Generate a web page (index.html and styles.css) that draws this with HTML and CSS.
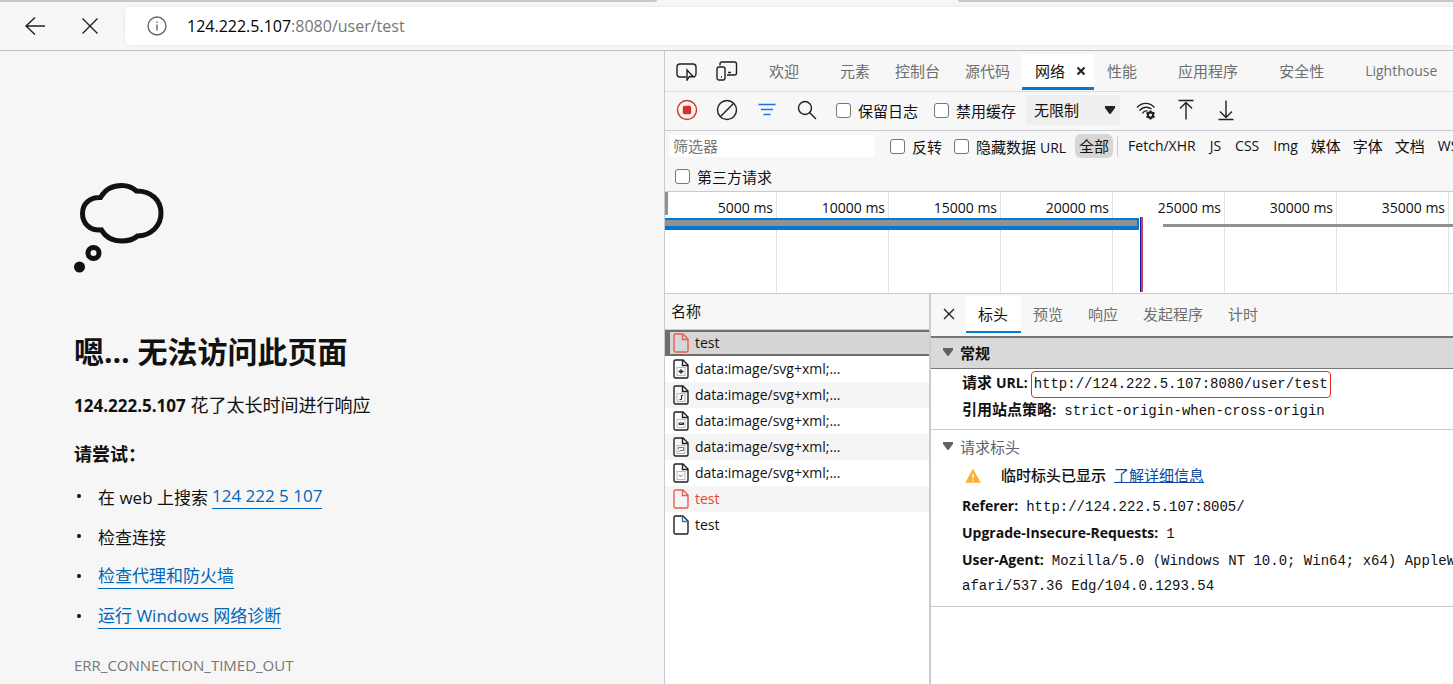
FILE: index.html
```html
<!DOCTYPE html>
<html lang="zh-CN">

<head>
    <meta charset="UTF-8">
    <meta name="viewport" content="width=device-width, initial-scale=1.0">
    <link rel="stylesheet" href="styles.css">
    <title>124.222.5.107</title>
</head>

<body>
    <!-- 浏览器地址栏 -->
    <div class="tabstrip">
        <span class="strip-left"></span>
        <span class="strip-right"></span>
    </div>
    <header class="browser-bar">
        <button class="nav-btn" aria-label="后退">
            <svg width="22" height="20" viewBox="0 0 22 20"><path d="M11 1.500L2 10l9 8.500M2 10h19" /></svg>
        </button>
        <button class="nav-btn" aria-label="停止">
            <svg width="18" height="18" viewBox="0 0 18 18"><path d="M1.500 1.500l15 15M16.500 1.500l-15 15" /></svg>
        </button>
        <div class="address">
            <svg width="20" height="20" viewBox="0 0 20 20"><circle cx="10" cy="10" r="9" /><path d="M10 8.500v6M10 5.500v1.500" /></svg>
            <span class="url"><b>124.222.5.107</b>:8080/user/test</span>
        </div>
    </header>

    <div class="main">
        <!-- 错误页 -->
        <main class="error-page">
            <svg class="cloud" width="92" height="92" viewBox="0 0 92 92">
                <path d="M26.500 15.500C31 7.500 38 3.500 48 3.500c6 0 10.500 2 14.500 5.500C77 9 87 18 87 31S77 53.500 63.500 54c-4 3.500-9 5-15.500 5-9.500 0-16.500-4-20.500-11C16 49 8.500 41.500 8.500 31.500S16 15 26.500 15.500z" />
                <circle cx="19.500" cy="71" r="5.500" />
                <circle class="dot" cx="5.500" cy="85" r="5.500" />
            </svg>
            <h1>嗯… 无法访问此页面</h1>
            <p class="reason"><b>124.222.5.107</b> 花了太长时间进行响应</p>
            <h2>请尝试：</h2>
            <ul class="tips">
                <li>在 web 上搜索 <a href="#">124 222 5 107</a></li>
                <li>检查连接</li>
                <li><a href="#">检查代理和防火墙</a></li>
                <li><a href="#">运行 Windows 网络诊断</a></li>
            </ul>
            <div class="code">ERR_CONNECTION_TIMED_OUT</div>
        </main>

        <!-- 开发者工具 -->
        <section class="devtools">
            <nav class="tool-tabs">
                <button class="icon-btn" aria-label="选择元素">
                    <svg width="22" height="20" viewBox="0 0 22 20"><path d="M10 16H4a3 3 0 0 1-3-3V6a3 3 0 0 1 3-3h13a3 3 0 0 1 3 3v7a3 3 0 0 1-2 2.800M11 9v10l2.500-3.500 4 .3z" /></svg>
                </button>
                <button class="icon-btn" aria-label="设备仿真">
                    <svg width="22" height="20" viewBox="0 0 22 20"><path d="M4 4.500V3a2 2 0 0 1 2-2h12.500a2 2 0 0 1 2 2v9a2 2 0 0 1-2 2H11M12 11.500h3M5 16h1" /><rect x="1" y="6" width="8" height="13" rx="2" /></svg>
                </button>
                <div class="tabs">
                    <button class="closable">欢迎</button>
                    <button>元素</button>
                    <button>控制台</button>
                    <button>源代码</button>
                    <button class="current">网络 <svg width="10" height="10" viewBox="0 0 10 10"><path d="M1.500 1.500l7 7M8.500 1.500l-7 7" /></svg></button>
                    <button class="closable">性能</button>
                    <button class="closable">应用程序</button>
                    <button class="closable">安全性</button>
                    <button class="latin">Lighthouse</button>
                </div>
            </nav>

            <div class="toolbar">
                <button class="icon-btn record" aria-label="停止记录">
                    <svg width="22" height="22" viewBox="0 0 22 22"><circle cx="11" cy="11" r="9.500" /><rect x="7.500" y="7.500" width="7" height="7" rx="1" /></svg>
                </button>
                <button class="icon-btn" aria-label="清除">
                    <svg width="22" height="22" viewBox="0 0 22 22"><circle cx="11" cy="11" r="9.500" /><path d="M4.500 17.500l13-13" /></svg>
                </button>
                <button class="icon-btn filter-icon" aria-label="筛选">
                    <svg width="22" height="22" viewBox="0 0 22 22"><path d="M2.500 5.500h17M5 10.500h12M7.500 15.500h7" /></svg>
                </button>
                <button class="icon-btn" aria-label="搜索">
                    <svg width="22" height="22" viewBox="0 0 22 22"><circle cx="9" cy="9" r="6.500" /><path d="M13.500 13.500l6.500 6.500" /></svg>
                </button>
                <label><input type="checkbox">保留日志</label>
                <label><input type="checkbox">禁用缓存</label>
                <div class="throttle">
                    <select aria-label="网络节流">
                        <option>无限制</option>
                    </select>
                    <svg width="12" height="10" viewBox="0 0 12 10"><path d="M1 1h10v2L6.500 9h-1L1 3z" /></svg>
                </div>
                <button class="icon-btn" aria-label="网络条件">
                    <svg width="22" height="22" viewBox="0 0 22 22"><path d="M2 8.500C7 3 14.500 3 19.500 8.500M4.500 11.500c3.500-4 8.500-4 12-1.500M7.500 14.500c1-2 3-3 5-2.500" /><circle class="gear" cx="15.500" cy="16" r="3" /><path class="teeth" d="M15.500 11.500v9M11.500 13.700l8 4.600M11.500 18.300l8-4.600" /><circle class="hole" cx="15.500" cy="16" r="1.500" /></svg>
                </button>
                <button class="icon-btn" aria-label="导入">
                    <svg width="22" height="22" viewBox="0 0 22 22"><path d="M3.500 1.500h15M11 20.500V3.500M5 9.500l6-6 6 6" /></svg>
                </button>
                <button class="icon-btn" aria-label="导出">
                    <svg width="22" height="22" viewBox="0 0 22 22"><path d="M3.500 20.500h15M11 1.500v17M5 12.500l6 6 6-6" /></svg>
                </button>
            </div>

            <div class="filters">
                <div class="filter-row">
                    <input class="filter-text" type="text" placeholder="筛选器" aria-label="筛选器">
                    <label><input type="checkbox">反转</label>
                    <label><input type="checkbox"><span>隐藏数据 <span class="latin">URL</span></span></label>
                    <div class="types">
                        <button class="all">全部</button>
                        <button class="latin">Fetch/XHR</button>
                        <button class="latin">JS</button>
                        <button class="latin">CSS</button>
                        <button class="latin">Img</button>
                        <button>媒体</button>
                        <button>字体</button>
                        <button>文档</button>
                        <button class="latin">WS</button>
                    </div>
                </div>
                <div class="filter-row">
                    <label><input type="checkbox">第三方请求</label>
                </div>
            </div>

            <div class="timeline">
                <span>5000 ms</span>
                <span>10000 ms</span>
                <span>15000 ms</span>
                <span>20000 ms</span>
                <span>25000 ms</span>
                <span>30000 ms</span>
                <span>35000 ms</span>
                <span></span>
                <i class="grip"></i>
                <i class="bar"></i>
                <i class="event"></i>
                <i class="pending"></i>
            </div>

            <div class="panels">
                <table class="requests">
                    <thead>
                        <tr><th>名称</th></tr>
                    </thead>
                    <tbody>
                        <tr class="selected failed">
                            <td><svg width="16" height="20" viewBox="0 0 16 20"><path d="M1 2.500A1.500 1.500 0 0 1 2.500 1H10l5 5v11.500a1.500 1.500 0 0 1-1.500 1.500h-11A1.500 1.500 0 0 1 1 17.500zM9.500 1v5.500H15" /></svg>test</td>
                        </tr>
                        <tr>
                            <td><svg width="16" height="20" viewBox="0 0 16 20"><path d="M1 2.500A1.500 1.500 0 0 1 2.500 1H10l5 5v11.500a1.500 1.500 0 0 1-1.500 1.500h-11A1.500 1.500 0 0 1 1 17.500zM9.500 1v5.500H15" /><rect class="thumb" x="4" y="8.500" width="8" height="8" /><path class="mark" d="M8 10v5M5.500 12.500h5M6.500 11l3 3M9.500 11l-3 3" /></svg>data:image/svg+xml;…</td>
                        </tr>
                        <tr>
                            <td><svg width="16" height="20" viewBox="0 0 16 20"><path d="M1 2.500A1.500 1.500 0 0 1 2.500 1H10l5 5v11.500a1.500 1.500 0 0 1-1.500 1.500h-11A1.500 1.500 0 0 1 1 17.500zM9.500 1v5.500H15" /><rect class="thumb" x="4" y="8.500" width="8" height="8" /><path class="mark" d="M10 10.500H8.500v4H6.500" /></svg>data:image/svg+xml;…</td>
                        </tr>
                        <tr>
                            <td><svg width="16" height="20" viewBox="0 0 16 20"><path d="M1 2.500A1.500 1.500 0 0 1 2.500 1H10l5 5v11.500a1.500 1.500 0 0 1-1.500 1.500h-11A1.500 1.500 0 0 1 1 17.500zM9.500 1v5.500H15" /><rect class="thumb" x="4" y="8.500" width="8" height="8" /><path class="mark" d="M6 12h3.500v1.500H6zM10.500 11.500v2.500" /></svg>data:image/svg+xml;…</td>
                        </tr>
                        <tr>
                            <td><svg width="16" height="20" viewBox="0 0 16 20"><path d="M1 2.500A1.500 1.500 0 0 1 2.500 1H10l5 5v11.500a1.500 1.500 0 0 1-1.500 1.500h-11A1.500 1.500 0 0 1 1 17.500zM9.500 1v5.500H15" /><rect class="thumb" x="4" y="8.500" width="8" height="8" /><path class="mark thin" d="M5.500 12v-1.500h5v3H7L5.500 15" /></svg>data:image/svg+xml;…</td>
                        </tr>
                        <tr>
                            <td><svg width="16" height="20" viewBox="0 0 16 20"><path d="M1 2.500A1.500 1.500 0 0 1 2.500 1H10l5 5v11.500a1.500 1.500 0 0 1-1.500 1.500h-11A1.500 1.500 0 0 1 1 17.500zM9.500 1v5.500H15" /><rect class="thumb" x="4" y="8.500" width="8" height="8" /><path class="mark thin" d="M6 12l2 1.500 2-2" /></svg>data:image/svg+xml;…</td>
                        </tr>
                        <tr class="failed">
                            <td><svg width="16" height="20" viewBox="0 0 16 20"><path d="M1 2.500A1.500 1.500 0 0 1 2.500 1H10l5 5v11.500a1.500 1.500 0 0 1-1.500 1.500h-11A1.500 1.500 0 0 1 1 17.500zM9.500 1v5.500H15" /></svg>test</td>
                        </tr>
                        <tr>
                            <td><svg width="16" height="20" viewBox="0 0 16 20"><path d="M1 2.500A1.500 1.500 0 0 1 2.500 1H10l5 5v11.500a1.500 1.500 0 0 1-1.500 1.500h-11A1.500 1.500 0 0 1 1 17.500z" /><path class="fold" d="M9.500 1v5.500H15" /></svg>test</td>
                        </tr>
                    </tbody>
                </table>

                <div class="detail">
                    <nav class="detail-tabs">
                        <button class="close" aria-label="关闭">
                            <svg width="12" height="12" viewBox="0 0 12 12"><path d="M1 1l10 10M11 1L1 11" /></svg>
                        </button>
                        <button class="current">标头</button>
                        <button>预览</button>
                        <button>响应</button>
                        <button>发起程序</button>
                        <button>计时</button>
                    </nav>
                    <div class="group-title general">
                        <svg width="12" height="10" viewBox="0 0 12 10"><path d="M1 1h10v2L6.500 9h-1L1 3z" /></svg>常规
                    </div>
                    <div class="group">
                        <div class="line"><b>请求 <span class="latin">URL:</span></b><code class="marked">http://124.222.5.107:8080/user/test</code></div>
                        <div class="line"><b>引用站点策略:</b><code>strict-origin-when-cross-origin</code></div>
                    </div>
                    <div class="group-title">
                        <svg width="12" height="10" viewBox="0 0 12 10"><path d="M1 1h10v2L6.500 9h-1L1 3z" /></svg>请求标头
                    </div>
                    <div class="group">
                        <div class="line warning">
                            <svg width="16" height="14" viewBox="0 0 16 14"><path d="M8 1l6.500 12h-13z" /><path class="bang" d="M8 5v4M8 10.500v1.200" /></svg>
                            <span>临时标头已显示</span>
                            <a href="#">了解详细信息</a>
                        </div>
                        <div class="line"><b class="latin">Referer:</b><code>http://124.222.5.107:8005/</code></div>
                        <div class="line"><b class="latin">Upgrade-Insecure-Requests:</b><code>1</code></div>
                        <div class="line"><b class="latin">User-Agent:</b><code>Mozilla/5.0 (Windows NT 10.0; Win64; x64) AppleWebKit/537.36</code></div>
                        <div class="line"><code>afari/537.36 Edg/104.0.1293.54</code></div>
                    </div>
                </div>
            </div>
        </section>
    </div>
</body>

</html>
```

FILE: styles.css
```css
* {
    margin: 0;
    padding: 0;
    box-sizing: border-box;
}

body {
    display: flex;
    flex-direction: column;
    height: 100vh;
    overflow: hidden;
    background-color: #f7f7f7;
    color: #111;
    font-family: "Open Sans", "Noto Sans CJK SC", sans-serif;
    font-size: 15px;
}

button {
    border: none;
    background: none;
    color: inherit;
    font: inherit;
    white-space: nowrap;
    cursor: pointer;
}

svg {
    display: block;
    flex-shrink: 0;
    fill: none;
    stroke: #202124;
    stroke-width: 1.4;
}

.latin {
    font-size: 14px;
}

/* 地址栏 */
.tabstrip {
    display: flex;
    justify-content: space-between;
    height: 2px;
}

.strip-left {
    width: 45.2%;
    background-color: #c8c8c8;
    border-bottom-right-radius: 4px;
}

.strip-right {
    width: 34.1%;
    background-color: #c8c8c8;
    border-bottom-left-radius: 4px;
}

.browser-bar {
    display: flex;
    align-items: center;
    flex-shrink: 0;
    height: 49px;
    padding-left: 24px;
    border-bottom: 1px solid #bcbcbc;
}

.nav-btn {
    width: 22px;
    margin-right: 33px;
}

.nav-btn svg {
    margin: 0 auto;
}

.address {
    display: flex;
    align-items: center;
    flex: 1;
    height: 38px;
    margin-left: -9px;
    padding-left: 22px;
    gap: 20px;
    background-color: #fff;
    border-radius: 5px 0 0 5px;
    box-shadow: 0 0 4px #e4e4e4;
}

.address svg {
    stroke: #666;
}

.url {
    color: #767676;
    font-size: 16px;
}

.url b {
    color: #000;
    font-weight: normal;
}

.main {
    display: flex;
    flex: 1;
    min-height: 0;
}

/* 错误页 */
.error-page {
    width: 45.7%;
    flex-shrink: 0;
    padding: 131px 24px 0 74px;
    background-color: #f6f6f6;
}

.cloud {
    stroke: #111;
    stroke-width: 5;
}

.cloud .dot {
    fill: #111;
    stroke: none;
}

.error-page h1 {
    margin-top: 57px;
    font-size: 30px;
    line-height: 42px;
}

.reason {
    margin-top: 20px;
    font-size: 18px;
    line-height: 24px;
}

.reason b {
    font-size: 17px;
}

.error-page h2 {
    margin-top: 24px;
    font-size: 18px;
    line-height: 24px;
}

.tips {
    margin-top: 10px;
    list-style: none;
    font-size: 17px;
}

.tips li {
    display: flex;
    align-items: center;
    height: 40px;
    gap: 4px;
}

.tips li::before {
    content: "";
    width: 4px;
    height: 4px;
    margin: 0 13px 0 3px;
    border-radius: 50%;
    background-color: #111;
}

.tips a {
    line-height: 24px;
    border-bottom: 1px solid #0067b8;
    color: #0067b8;
    text-decoration: none;
}

.code {
    margin-top: 19px;
    color: #767676;
    font-size: 15px;
    line-height: 20px;
}

/* 开发者工具 */
.devtools {
    display: flex;
    flex-direction: column;
    flex: 1;
    min-width: 0;
    border-left: 1px solid #c8cbd1;
    overflow: hidden;
}

.tool-tabs {
    display: flex;
    align-items: center;
    flex-shrink: 0;
    height: 41px;
    padding: 0 11px;
    gap: 18px;
    border-bottom: 1px solid #dcdcdc;
}

.icon-btn {
    width: 22px;
    flex-shrink: 0;
}

.tabs {
    display: flex;
    align-self: stretch;
    padding: 3px 0 1px;
    color: #6e6e6e;
}

.tabs button {
    display: flex;
    align-items: center;
    padding: 0 12px 0 13px;
    border-bottom: 3px solid transparent;
}

.tabs .closable {
    padding-right: 28px;
}

.tabs .current {
    padding-right: 8px;
    gap: 11px;
    background-color: #fff;
    border-bottom-color: #0078d4;
    color: #111;
}

.tabs .current svg {
    stroke-width: 2;
}

.toolbar {
    display: flex;
    align-items: center;
    flex-shrink: 0;
    height: 39px;
    padding: 0 11px 2px;
    gap: 18px;
    border-bottom: 1px solid #c8cbd1;
}

.record svg {
    stroke: #d93025;
}

.record rect {
    fill: #d93025;
}

.filter-icon svg {
    stroke: #1a73e8;
    stroke-width: 1.6;
}

label {
    display: flex;
    align-items: center;
    gap: 7px;
    white-space: nowrap;
}

input[type="checkbox"] {
    appearance: none;
    width: 15px;
    height: 15px;
    border: 1px solid #767676;
    border-radius: 3px;
    background-color: #fff;
}

.toolbar label {
    margin-right: -2px;
}

.throttle {
    display: flex;
    align-items: center;
    width: 94px;
    height: 30px;
    margin: 0 -3px 0 -6px;
    padding-right: 4px;
    border-radius: 3px;
    background-color: #efefef;
}

.throttle select {
    appearance: none;
    flex: 1;
    min-width: 0;
    padding-left: 8px;
    border: none;
    background: none;
    color: #111;
    font: inherit;
}

.throttle svg {
    fill: #202124;
    stroke: none;
}

.gear {
    fill: #202124;
}

.teeth {
    stroke-width: 2;
}

.hole {
    fill: #fff;
    stroke: none;
}

.filters {
    flex-shrink: 0;
    height: 61px;
    border-bottom: 1px solid #c8cbd1;
}

.filter-row {
    display: flex;
    align-items: center;
    height: 30px;
    padding-left: 10px;
    gap: 12px;
}

.filter-text {
    width: 204px;
    height: 22px;
    margin: 0 4px 0 -5px;
    padding-left: 3px;
    flex-shrink: 0;
    border: none;
    background-color: #fff;
    font: inherit;
}

.filter-text::placeholder {
    color: #767676;
}

.types {
    display: flex;
    align-items: center;
    margin-left: -3px;
}

.types button {
    padding: 0 6px;
    line-height: 24px;
}

.types .latin {
    padding: 0 7px;
}

.types .all {
    margin-right: 4px;
    padding: 0 4px;
    border-radius: 6px;
    background-color: #d6d6d6;
}

.types .all + .latin {
    padding-left: 10px;
    border-left: 1px solid #c8cbd1;
    line-height: 20px;
}

.timeline {
    display: flex;
    position: relative;
    flex-shrink: 0;
    height: 102px;
    border-bottom: 1px solid #c8cbd1;
    background-color: #fff;
    overflow: hidden;
}

.timeline span {
    flex: 0 0 112px;
    padding: 6px 3px 0 0;
    border-right: 1px solid #e2e2e2;
    font-size: 14px;
    line-height: 20px;
    text-align: right;
}

/* 时间轴上的请求条 */
.timeline i {
    position: absolute;
}

.grip {
    left: 0;
    top: 0;
    width: 3px;
    height: 23px;
    background-color: #919191;
}

.bar {
    left: 0;
    top: 26px;
    width: 474px;
    height: 12px;
    border: solid #0078d4;
    border-width: 2px 2px 4px 0;
    background-color: #919191;
}

.event {
    left: 475px;
    top: 25px;
    width: 3px;
    bottom: 1px;
    border-left: 1px solid #1a1aa6;
    background-color: #c8445a;
}

.pending {
    left: 498px;
    right: 0;
    top: 32px;
    height: 3px;
    background-color: #919191;
}

/* 请求列表 */
.panels {
    display: flex;
    flex: 1;
    min-height: 0;
    background-color: #fff;
}

.requests {
    align-self: flex-start;
    width: 264px;
    flex-shrink: 0;
    border-collapse: collapse;
}

.requests th {
    height: 35px;
    padding: 0 0 2px 6px;
    border-bottom: 1px solid #c8cbd1;
    background-color: #f7f7f7;
    font-weight: normal;
    text-align: left;
}

.requests td {
    display: flex;
    align-items: center;
    height: 26px;
    padding-left: 8px;
    gap: 6px;
    font-size: 14px;
}

.requests tbody tr:nth-child(odd) {
    background-color: #f5f5f5;
}

.failed {
    color: #ea4335;
}

.failed svg {
    stroke: #ee5c4a;
}

.requests .selected td {
    padding-left: 3px;
    border: solid #6e6e6e;
    border-width: 2px 0 2px 5px;
    background-color: #d6d6d6;
    color: #111;
}

.thumb {
    stroke: #bbb;
    stroke-width: 1;
}

.mark {
    stroke-width: 1;
}

.mark.thin {
    stroke: #777;
}

.fold {
    stroke: #3f6fb5;
}

/* 详情 */
.detail {
    flex: 1;
    min-width: 0;
    border-left: 2px solid #c8cbd1;
    overflow: hidden;
}

.detail-tabs {
    display: flex;
    height: 42px;
    padding: 2px 0 3px;
    background-color: #f7f7f7;
    color: #6e6e6e;
}

.detail-tabs button {
    padding: 0 13px 0 12px;
    border-bottom: 2px solid transparent;
}

.detail-tabs .close {
    padding-right: 11px;
}

.detail-tabs .current {
    background-color: #fff;
    border-bottom-color: #0078d4;
    color: #111;
}

.group-title {
    display: flex;
    align-items: center;
    height: 32px;
    padding-left: 11px;
    gap: 6px;
    color: #5f6368;
}

.group-title svg {
    fill: #5f6368;
    stroke: none;
}

.general {
    height: 33px;
    padding-bottom: 2px;
    border-top: 2px solid #767676;
    border-bottom: 1px solid #767676;
    background-color: #d9d9d9;
    color: #111;
    font-weight: bold;
}

.group {
    padding-bottom: 6px;
    border-bottom: 1px solid #c8cbd1;
}

.line {
    display: flex;
    align-items: baseline;
    height: 27px;
    padding-left: 31px;
    gap: 8px;
    line-height: 27px;
    white-space: nowrap;
}

.line code {
    font-family: "Liberation Mono", monospace;
    font-size: 14px;
}

.line .marked {
    margin-left: -5px;
    padding: 0 2px;
    border: 1px solid #f02a1d;
    border-radius: 4px;
    line-height: 25px;
}

.warning {
    align-items: center;
    height: 30px;
    padding-bottom: 3px;
    font-weight: 500;
}

.warning svg {
    margin: 0 12px 0 3px;
    fill: #fbb12f;
    stroke: #fbb12f;
}

.warning .bang {
    stroke: #fff;
}

.warning a {
    color: #0b4a9e;
    font-weight: normal;
}
```
